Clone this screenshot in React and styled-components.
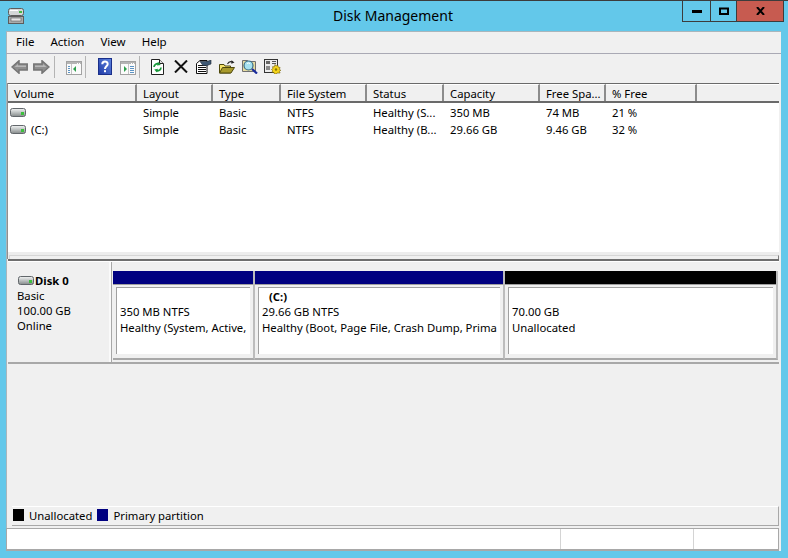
import React from 'react';
import styled, { createGlobalStyle } from 'styled-components';

const GlobalStyle = createGlobalStyle`
  html, body { margin: 0; padding: 0; background: #63c8ea; }
  body { font-family: "Noto Sans", "Open Sans", sans-serif; font-size: 11.3px; color: #000; }
`;

const columns = [
  { name: 'Volume', width: 129 },
  { name: 'Layout', width: 76 },
  { name: 'Type', width: 68 },
  { name: 'File System', width: 86 },
  { name: 'Status', width: 77 },
  { name: 'Capacity', width: 96 },
  { name: 'Free Spa...', width: 66 },
  { name: '% Free', width: 91 },
];

const rows = [
  ['', 'Simple', 'Basic', 'NTFS', 'Healthy (S...', '350 MB', '74 MB', '21 %'],
  ['(C:)', 'Simple', 'Basic', 'NTFS', 'Healthy (B...', '29.66 GB', '9.46 GB', '32 %'],
];

const partitions = [
  { width: 140, color: '#000080', lines: ['350 MB NTFS', 'Healthy (System, Active,'] },
  { width: 248, color: '#000080', name: '(C:)', lines: ['29.66 GB NTFS', 'Healthy (Boot, Page File, Crash Dump, Prima'] },
  { width: 271, color: '#000000', lines: ['70.00 GB', 'Unallocated'] },
];

const Frame = styled.div`
  width: 788px;
  height: 558px;
  box-sizing: border-box;
  border-top: 1px solid #3c3c3c;
  display: flex;
  flex-direction: column;
  overflow: hidden;
`;

const TitleBar = styled.div`
  height: 30px;
  flex: none;
  display: grid;
  grid-template-columns: 1fr auto 1fr;
  align-items: start;
`;

const AppIcon = styled.div`
  padding: 7px 0 0 8px;
  line-height: 0;
`;

const Title = styled.div`
  font-size: 14px;
  line-height: 29px;
  padding-right: 2px;
`;

const Controls = styled.div`
  justify-self: end;
  margin-right: 4px;
  display: flex;
  height: 21px;
  box-sizing: border-box;
  border: 1px solid #3c3c3c;
  border-top: 0;
`;

const ControlButton = styled.div`
  width: ${(p) => p.$w}px;
  display: flex;
  align-items: center;
  justify-content: center;
  background: ${(p) => (p.$close ? '#c75b50' : 'transparent')};
  border-left: ${(p) => (p.$first ? '0' : '1px solid #3c3c3c')};
`;

const Client = styled.div`
  flex: 1;
  margin: 0 7px 7px 6px;
  display: flex;
  flex-direction: column;
  background: #f0f0f0;
  box-shadow: inset 1px 1px 0 #a9b6bc;
  min-height: 0;
`;

const MenuBar = styled.div`
  height: 22px;
  flex: none;
  display: flex;
  align-items: center;
  padding-left: 10px;
  gap: 16px;
  border-bottom: 1px solid #a9a9b4;
`;

const MenuItem = styled.span`
  font-size: 11.5px;
  line-height: 20px;
`;

const Toolbar = styled.div`
  height: 29px;
  flex: none;
  box-sizing: border-box;
  display: flex;
  align-items: center;
  padding: 0 0 4px 2px;
`;

const ToolIcon = styled.div`
  width: ${(p) => p.$w || 23}px;
  height: 22px;
  display: flex;
  align-items: center;
  justify-content: center;
`;

const ToolSep = styled.div`
  width: 1px;
  height: 22px;
  background: #b4b4b4;
  margin: 0 ${(p) => p.$r}px 0 ${(p) => p.$l}px;
`;

const ListPane = styled.div`
  height: 176px;
  flex: none;
  margin: 0 2px 0 1px;
  border-left: 1px solid #8f8f8f;
  display: flex;
  flex-direction: column;
  background: #fff;
`;

const HeaderRow = styled.div`
  height: 20px;
  flex: none;
  display: flex;
  box-sizing: border-box;
  background: #f0f0f0;
  border-top: 1px solid #6a6a6a;
  border-bottom: 2px solid #6a6a6a;
`;

const HeaderCell = styled.div`
  box-sizing: border-box;
  flex: ${(p) => (p.$fill ? '1' : 'none')};
  width: ${(p) => p.$w}px;
  padding-left: 6px;
  line-height: 17px;
  border-top: 1px solid #fff;
  border-right: ${(p) => (p.$fill ? '0' : '2px solid #8c8c8c')};
  white-space: nowrap;
  overflow: hidden;
`;

const Row = styled.div`
  height: 17px;
  display: flex;
  line-height: 17px;
  margin-top: ${(p) => (p.$first ? '1px' : '0')};
`;

const Cell = styled.div`
  flex: none;
  box-sizing: border-box;
  width: ${(p) => p.$w}px;
  padding-left: 6px;
  white-space: nowrap;
  overflow: hidden;
`;

const VolumeCell = styled(Cell)`
  display: flex;
  align-items: center;
  gap: 5px;
  padding-left: 2px;
`;

const ListSpacer = styled.div`
  flex: 1;
`;

const ScrollTrack = styled.div`
  height: 7px;
  flex: none;
  background: #ededed;
  padding: 3px 0 0 1px;
  box-sizing: border-box;
`;

const ScrollThumb = styled.div`
  height: 4px;
  background: #f0f0f0;
  border-top: 1px solid #d6d6d6;
  border-left: 1px solid #d6d6d6;
  border-right: 1px solid #808080;
  box-sizing: border-box;
`;

const Splitter = styled.div`
  height: 2px;
  flex: none;
  margin: 0 2px;
  background: #6e6e6e;
`;

const DiskArea = styled.div`
  flex: 1;
  margin: 0 2px;
  min-height: 0;
`;

const DiskRow = styled.div`
  height: 103px;
  display: flex;
  border-bottom: 2px solid #a8a8a8;
  box-sizing: border-box;
  border-top: 1px solid #fff;
`;

const DiskLabel = styled.div`
  flex: none;
  width: 104px;
  box-sizing: border-box;
  padding: 11px 0 0 9px;
  line-height: 15px;
  border-right: 1px solid #a8a8a8;
  box-shadow: inset -2px 0 0 #fafafa;
`;

const DiskName = styled.div`
  display: flex;
  align-items: center;
  gap: 1px;
  font-weight: 700;
  padding-left: 1px;
`;

const Partitions = styled.div`
  flex: none;
  height: 98px;
  box-sizing: border-box;
  display: flex;
  padding: 9px 0 0 1px;
`;

const Partition = styled.div`
  flex: none;
  width: ${(p) => p.$w}px;
  display: flex;
  flex-direction: column;
  border-right: 2px solid #bcbcbc;
  border-bottom: 2px solid #a8a8a8;
`;

const PartitionBar = styled.div`
  height: 13px;
  flex: none;
  background: ${(p) => p.$color};
  border-bottom: 1px solid #a0a0a0;
`;

const PartitionBody = styled.div`
  flex: 1;
  margin: 2px 3px 4px 3px;
  box-sizing: border-box;
  background: #fff;
  border-top: 1px solid #a0a0a0;
  border-left: 1px solid #a0a0a0;
  padding: 0 3px;
  display: flex;
  flex-direction: column;
  overflow: hidden;
`;

const PartitionName = styled.div`
  height: 15px;
  line-height: 15px;
  padding: 1px 0 0 7px;
  font-weight: 700;
`;

const PartitionLine = styled.div`
  line-height: 16px;
  white-space: nowrap;
  overflow: hidden;
`;

const Legend = styled.div`
  height: 20px;
  flex: none;
  margin: 0 2px 0 6px;
  padding-bottom: 2px;
  display: flex;
  align-items: center;
  gap: 5px;
  box-sizing: border-box;
  border-top: 1px solid #fff;
  border-right: 1px solid #a8a8a8;
  border-bottom: 1px solid #a8a8a8;
`;

const Swatch = styled.span`
  width: 11px;
  height: 12px;
  background: ${(p) => p.$color};
  margin-left: ${(p) => (p.$first ? '1px' : '0')};
`;

const StatusBar = styled.div`
  height: 23px;
  flex: none;
  margin: 2px 2px 0 0;
  display: flex;
  background: #fff;
  box-sizing: border-box;
  border: 1px solid #a8a8a8;
  border-bottom-width: 2px;
`;

const StatusCell = styled.div`
  flex: ${(p) => (p.$w ? 'none' : '1')};
  width: ${(p) => p.$w}px;
  border-right: ${(p) => (p.$last ? '0' : '1px solid #d4d4d4')};
`;

const PaneSvg = styled.svg`
  margin-top: 2px;
`;

const DriveIcon = () => (
  <svg width="16" height="9" viewBox="0 0 16 9">
    <defs>
      <linearGradient id="driveBody" x1="0" y1="0" x2="0" y2="1">
        <stop offset="0" stopColor="#f4f5f5" />
        <stop offset="0.45" stopColor="#c2c6c6" />
        <stop offset="1" stopColor="#858a8a" />
      </linearGradient>
    </defs>
    <rect x="0.5" y="0.5" width="15" height="8" rx="2" fill="url(#driveBody)" stroke="#62676b" />
    <rect x="11" y="4" width="3" height="3" fill="#3cc03c" />
  </svg>
);

const ArrowIcon = ({ flip }) => (
  <svg width="17" height="14" viewBox="0 0 17 14" style={flip ? { transform: 'scaleX(-1)' } : undefined}>
    <path d="M1 7 8 .8v3.200h8.200v6H8v3.200z" fill="#8f8f8f" stroke="#757575" strokeWidth="1.500" />
    <path d="M3.500 7 7 4v1.500h8V7z" fill="#b8b8b8" />
  </svg>
);

const PaneIcon = ({ right }) => (
  <PaneSvg width="16" height="14" viewBox="0 0 16 14" shapeRendering="crispEdges">
    <rect x="0.5" y="0.5" width="15" height="13" fill="#fbfbfb" stroke="#a2a2a2" />
    <rect x="1" y="1" width="14" height="2" fill="#b4b4b4" />
    <path d="M11 2h1M13 2h1" stroke="#fff" />
    {right ? (
      <>
        <path d="M8 3v10" stroke="#c4c4c4" />
        <path d="M10 5h4M10 7h4M10 9h4M10 11h4" stroke="#5b93c4" />
        <path d="M4 5v6l3-3z" fill="#2ea04c" shapeRendering="auto" />
      </>
    ) : (
      <>
        <path d="M5 3v10" stroke="#c4c4c4" />
        <path d="M2 5h2M2 7h2M2 9h2M2 11h2" stroke="#5b93c4" />
        <path d="M10 5v6L7 8z" fill="#2ea04c" shapeRendering="auto" />
      </>
    )}
  </PaneSvg>
);

const HelpIcon = () => (
  <svg width="14" height="17" viewBox="0 0 14 17">
    <defs>
      <linearGradient id="helpFill" x1="0" y1="1" x2="1" y2="0">
        <stop offset="0" stopColor="#1f3aa6" />
        <stop offset="1" stopColor="#5f86e0" />
      </linearGradient>
    </defs>
    <rect x="0.5" y="0.5" width="13" height="16" fill="url(#helpFill)" stroke="#1a2f8a" />
    <path d="M4.300 6.200C4.300 2.700 9.700 2.700 9.700 6c0 2.300-2.700 2.400-2.700 5" fill="none" stroke="#fff" strokeWidth="2" />
    <rect x="6" y="12.200" width="2" height="2" fill="#fff" />
  </svg>
);

const RefreshIcon = () => (
  <svg width="13" height="16" viewBox="0 0 13 16">
    <path d="M.5.500h8l4 4v11H.5z" fill="#fff" stroke="#222" />
    <path d="M8.500.500v4h4" fill="#ddd" stroke="#222" />
    <path d="M3 8a3.500 3.500 0 0 1 5-3M10 8.500a3.500 3.500 0 0 1-5 3" fill="none" stroke="#18993a" strokeWidth="1.700" />
    <path d="M7 2.800 9.800 6 6 6.600zM6 13.500 3.200 10.500 7 9.800z" fill="#18993a" />
  </svg>
);

const DeleteIcon = () => (
  <svg width="14" height="13" viewBox="0 0 14 13">
    <path d="M1 .5 13 12.500M13 .5 1 12.500" stroke="#111" strokeWidth="2" />
  </svg>
);

const PropertiesIcon = () => (
  <svg width="16" height="14" viewBox="0 0 16 14">
    <path d="M.5 3.500 4 .5h7v13H.5z" fill="#fff" stroke="#111" />
    <g shapeRendering="crispEdges">
      <path d="M2 5.500h8M2 7.500h8M2 9.500h8M2 11.500h8" stroke="#111" />
    </g>
    <path d="M4 1.500h7l4-1.500v4l-4 1.500H7z" fill="#3e5874" stroke="#1f2a38" strokeWidth=".6" />
  </svg>
);

const OpenIcon = () => (
  <svg width="16" height="14" viewBox="0 0 16 14">
    <path d="M.5 13V4.500h4.500l1 1.500h5.500v7z" fill="#f6e46c" stroke="#4e480c" />
    <path d="M.5 13l3-5.500h12L12 13z" fill="#a89a2c" stroke="#4e480c" />
    <path d="M8.500 4C9.500 2 11.500 1.300 13.500 2" fill="none" stroke="#222" strokeWidth="1.100" />
    <path d="M12.500.3 15.500 2.500 12.300 3.800z" fill="#222" />
  </svg>
);

const SearchIcon = () => (
  <svg width="16" height="15" viewBox="0 0 16 15">
    <path d="M.5 1.500h5l1 1h7v10H.5z" fill="#e8dca0" stroke="#707070" />
    <circle cx="6.500" cy="6.500" r="4.500" fill="#a6e2f0" stroke="#366b86" strokeWidth="1.200" />
    <path d="M5 4.500a2.500 2.500 0 0 1 3 0" fill="none" stroke="#fff" />
    <path d="M10 10 15 14.500" stroke="#1a2c9c" strokeWidth="2.200" />
  </svg>
);

const SettingsIcon = () => (
  <svg width="17" height="15" viewBox="0 0 17 15">
    <rect x="0.5" y="0.5" width="13" height="13" fill="#ececec" stroke="#333" />
    <g shapeRendering="crispEdges">
      <rect x="2" y="2" width="4" height="3" fill="#666" />
      <path d="M8 2.500h4M8 4.500h4" stroke="#555" />
      <rect x="2" y="7" width="4" height="4" fill="#8a8a8a" />
    </g>
    <path d="M11 5.500l1 1.500 1.800-.8.400 1.900 1.900.4-.8 1.800 1.500 1-1.500 1 .8 1.700H13l-.8 1H10.500l-.5-1.500-1.800-.2.300-1.800L7.500 10.500l1.500-1-.5-1.800 1.900 0z" fill="#f4d41a" stroke="#6b5800" strokeWidth=".6" />
    <circle cx="12" cy="10.500" r="1.200" fill="#8a7400" />
  </svg>
);

const DiskMgmtIcon = () => (
  <svg width="16" height="16" viewBox="0 0 16 16">
    <rect x="0.5" y="0.5" width="15" height="7" rx="2" fill="#d4d7d7" stroke="#5c5c5c" />
    <rect x="2" y="2" width="8" height="1" fill="#fff" />
    <rect x="11" y="3" width="3" height="2" fill="#45b845" />
    <rect x="0.5" y="8.5" width="15" height="7" fill="#a8acac" stroke="#5c5c5c" />
    <rect x="3" y="10" width="10" height="3" fill="#e6e6e6" stroke="#5c5c5c" strokeWidth=".6" />
  </svg>
);

export default function App() {
  return (
    <>
      <GlobalStyle />
      <Frame>
        <TitleBar>
          <AppIcon><DiskMgmtIcon /></AppIcon>
          <Title>Disk Management</Title>
          <Controls>
            <ControlButton $w={27} $first>
              <svg width="10" height="3" viewBox="0 0 10 3"><rect width="10" height="3" fill="#000" /></svg>
            </ControlButton>
            <ControlButton $w={25}>
              <svg width="10" height="8" viewBox="0 0 10 8"><path d="M1 1.500h8V7H1z" fill="none" stroke="#000" strokeWidth="2" /></svg>
            </ControlButton>
            <ControlButton $w={46} $close>
              <svg width="9" height="8" viewBox="0 0 9 8"><path d="M1 0l7 8M8 0 1 8" stroke="#000" strokeWidth="2" /></svg>
            </ControlButton>
          </Controls>
        </TitleBar>
        <Client>
          <MenuBar>
            <MenuItem>File</MenuItem>
            <MenuItem>Action</MenuItem>
            <MenuItem>View</MenuItem>
            <MenuItem>Help</MenuItem>
          </MenuBar>
          <Toolbar>
            <ToolIcon $w={22}><ArrowIcon /></ToolIcon>
            <ToolIcon $w={22}><ArrowIcon flip /></ToolIcon>
            <ToolSep $l={2} $r={7} />
            <ToolIcon><PaneIcon /></ToolIcon>
            <ToolSep $l={0} $r={7} />
            <ToolIcon><HelpIcon /></ToolIcon>
            <ToolIcon><PaneIcon right /></ToolIcon>
            <ToolSep $l={0} $r={6} />
            <ToolIcon><RefreshIcon /></ToolIcon>
            <ToolIcon><DeleteIcon /></ToolIcon>
            <ToolIcon><PropertiesIcon /></ToolIcon>
            <ToolIcon><OpenIcon /></ToolIcon>
            <ToolIcon><SearchIcon /></ToolIcon>
            <ToolIcon><SettingsIcon /></ToolIcon>
          </Toolbar>
          <ListPane>
            <HeaderRow>
              {columns.map((c) => (
                <HeaderCell key={c.name} $w={c.width}>{c.name}</HeaderCell>
              ))}
              <HeaderCell $fill />
            </HeaderRow>
            {rows.map((r, i) => (
              <Row key={i} $first={i === 0}>
                <VolumeCell $w={columns[0].width}>
                  <DriveIcon />
                  {r[0]}
                </VolumeCell>
                {r.slice(1).map((v, j) => (
                  <Cell key={j} $w={columns[j + 1].width}>{v}</Cell>
                ))}
              </Row>
            ))}
            <ListSpacer />
            <ScrollTrack><ScrollThumb /></ScrollTrack>
          </ListPane>
          <Splitter />
          <DiskArea>
            <DiskRow>
              <DiskLabel>
                <DiskName><DriveIcon />Disk 0</DiskName>
                <div>Basic</div>
                <div>100.00 GB</div>
                <div>Online</div>
              </DiskLabel>
              <Partitions>
                {partitions.map((p, i) => (
                  <Partition key={i} $w={p.width}>
                    <PartitionBar $color={p.color} />
                    <PartitionBody>
                      <PartitionName>{p.name}</PartitionName>
                      {p.lines.map((l) => <PartitionLine key={l}>{l}</PartitionLine>)}
                    </PartitionBody>
                  </Partition>
                ))}
              </Partitions>
            </DiskRow>
          </DiskArea>
          <Legend>
            <Swatch $color="#000" $first />
            <span>Unallocated</span>
            <Swatch $color="#000080" />
            <span>Primary partition</span>
          </Legend>
          <StatusBar>
            <StatusCell />
            <StatusCell $w={132} />
            <StatusCell $w={84} $last />
          </StatusBar>
        </Client>
      </Frame>
    </>
  );
}
